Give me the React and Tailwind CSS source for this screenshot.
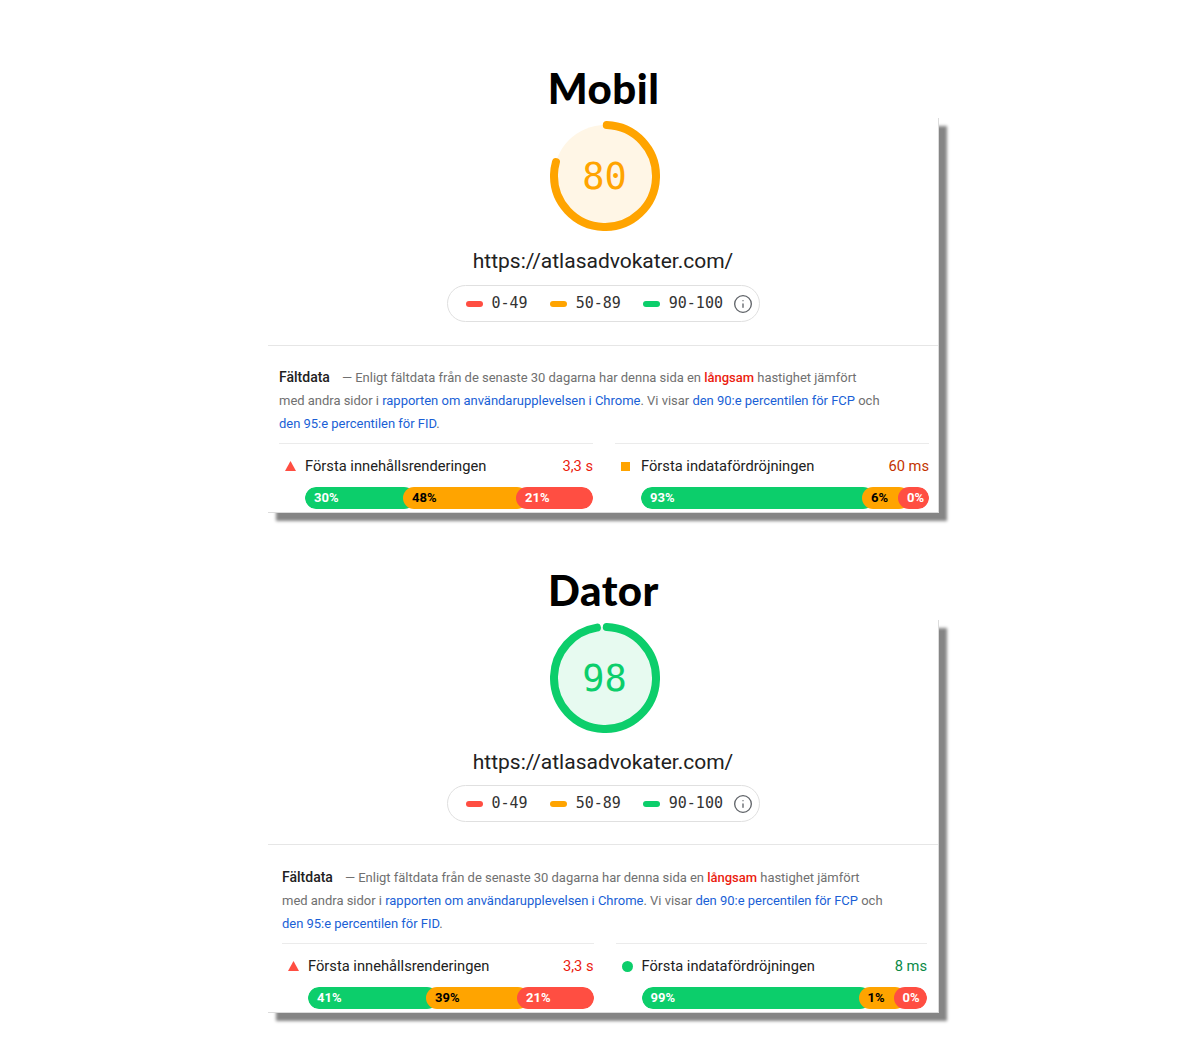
import React from "react";
import { Info } from "lucide-react";

const GREEN = "#0cce6b";
const ORANGE = "#ffa400";
const RED = "#ff4e42";

const sections = [
  {
    title: "Mobil",
    score: 80,
    ring: ORANGE,
    fill: "#fff6e6",
    scoreText: "text-[#ffa400]",
    pad: "pl-[11px] pr-[9px]",
    gap: { url: "mt-[16px]", legend: "mt-[10px]", divider: "mt-[23px]", text: "pt-[20px]" },
    metrics: [
      {
        icon: "triangle",
        label: "Första innehållsrenderingen",
        value: "3,3 s",
        valueColor: "text-[#eb1c0f]",
        segs: [
          { pct: "30%", w: "w-[110px]", bg: "bg-[#0cce6b]", text: "text-white" },
          { pct: "48%", w: "w-[125px]", bg: "bg-[#ffa400]", text: "text-black" },
          { pct: "21%", w: "flex-1", bg: "bg-[#ff4e42]", text: "text-white" },
        ],
      },
      {
        icon: "square",
        label: "Första indatafördröjningen",
        value: "60 ms",
        valueColor: "text-[#c33300]",
        segs: [
          { pct: "93%", w: "w-[233px]", bg: "bg-[#0cce6b]", text: "text-white" },
          { pct: "6%", w: "w-[48px]", bg: "bg-[#ffa400]", text: "text-black" },
          { pct: "0%", w: "flex-1", bg: "bg-[#ff4e42]", text: "text-white" },
        ],
      },
    ],
  },
  {
    title: "Dator",
    score: 98,
    ring: GREEN,
    fill: "#e7faf0",
    scoreText: "text-[#0cce6b]",
    pad: "pl-[14px] pr-[11px]",
    gap: { url: "mt-[15px]", legend: "mt-[9px]", divider: "mt-[22px]", text: "pt-[21px]" },
    metrics: [
      {
        icon: "triangle",
        label: "Första innehållsrenderingen",
        value: "3,3 s",
        valueColor: "text-[#eb1c0f]",
        segs: [
          { pct: "41%", w: "w-[130px]", bg: "bg-[#0cce6b]", text: "text-white" },
          { pct: "39%", w: "w-[103px]", bg: "bg-[#ffa400]", text: "text-black" },
          { pct: "21%", w: "flex-1", bg: "bg-[#ff4e42]", text: "text-white" },
        ],
      },
      {
        icon: "circle",
        label: "Första indatafördröjningen",
        value: "8 ms",
        valueColor: "text-[#0a8a47]",
        segs: [
          { pct: "99%", w: "w-[229px]", bg: "bg-[#0cce6b]", text: "text-white" },
          { pct: "1%", w: "w-[47px]", bg: "bg-[#ffa400]", text: "text-black" },
          { pct: "0%", w: "flex-1", bg: "bg-[#ff4e42]", text: "text-white" },
        ],
      },
    ],
  },
];

const Gauge = ({ score, ring, fill, scoreText }) => {
  const r = 51;
  const c = 2 * Math.PI * r;
  return (
    <div className="relative w-[110px] h-[110px]">
      <svg width="110" height="110" viewBox="0 0 110 110" className="-rotate-90">
        <circle cx="55" cy="55" r={r} fill={fill} />
        <circle
          cx="55"
          cy="55"
          r={r}
          fill="none"
          stroke={ring}
          strokeWidth="8"
          strokeLinecap="round"
          strokeDasharray={`${(c * score) / 100 - 4} ${c}`}
          transform="rotate(2 55 55)"
        />
      </svg>
      <div
        className={`absolute inset-0 flex items-center justify-center pt-[2px] font-['DejaVu_Sans_Mono',monospace] text-[37px] ${scoreText}`}
      >
        {score}
      </div>
    </div>
  );
};

const Legend = () => (
  <div className="mx-auto flex h-[37px] w-[313px] items-center rounded-full border border-[#e0e0e0] pl-[18px] font-['DejaVu_Sans_Mono',monospace] text-[15px] text-[#333]">
    <span className="h-[6px] w-[17px] rounded-full bg-[#ff4e42]" />
    <span className="ml-[9px]">0-49</span>
    <span className="ml-[22px] h-[6px] w-[17px] rounded-full bg-[#ffa400]" />
    <span className="ml-[9px]">50-89</span>
    <span className="ml-[22px] h-[6px] w-[17px] rounded-full bg-[#0cce6b]" />
    <span className="ml-[9px]">90-100</span>
    <Info className="ml-[10px] text-[#5f6368]" size={20} strokeWidth={1.6} />
  </div>
);

const MetricIcon = ({ kind }) => {
  if (kind === "triangle")
    return (
      <svg width="11" height="10" viewBox="0 0 11 10">
        <polygon points="5.5,0 11,10 0,10" fill={RED} />
      </svg>
    );
  if (kind === "square") return <span className="block h-[9px] w-[9px] bg-[#ffa400]" />;
  return <span className="block h-[11px] w-[11px] rounded-full bg-[#0cce6b]" />;
};

const Metric = ({ m }) => (
  <div className="flex-1 border-t border-[#ebebeb] pb-[3px]">
    <div className="mt-[12px] flex h-[20px] items-center text-[14.7px] leading-[20px]">
      <span className="flex w-[26px] pl-[6px]">
        <MetricIcon kind={m.icon} />
      </span>
      <span className="flex-1 text-[#212121]">{m.label}</span>
      <span className={m.valueColor}>{m.value}</span>
    </div>
    <div className="ml-[26px] mt-[11px] flex h-[22px] overflow-hidden rounded-full">
      {m.segs.map((s, i) => (
        <div
          key={i}
          className={`relative flex h-full items-center rounded-full pl-[9px] text-[13px] font-bold ${s.w} ${s.bg} ${s.text} ${i > 0 ? "-ml-[12px]" : ""}`}
        >
          {s.pct}
        </div>
      ))}
    </div>
  </div>
);

const Card = ({ s }) => (
  <div className="relative bg-white border-r border-b border-[#dcdcdc] shadow-[8px_8px_3px_rgba(0,0,0,0.48)]">
    <div className="flex justify-center pl-[3px] pt-[3px]">
      <Gauge score={s.score} ring={s.ring} fill={s.fill} scoreText={s.scoreText} />
    </div>
    <div className={`${s.gap.url} text-center text-[21px] leading-[28px] text-[#212121]`}>
      https://atlasadvokater.com/
    </div>
    <div className={s.gap.legend}>
      <Legend />
    </div>
    <div className={`${s.gap.divider} border-t border-[#e6e6e6]`} />
    <p className={`${s.gap.text} text-[13px] leading-[23px] tracking-[-0.02px] text-[#707070] ${s.pad}`}>
      <span className="mr-[12px] text-[14px] font-medium tracking-normal text-[#212121]">Fältdata</span>
      — Enligt fältdata från de senaste 30 dagarna har denna sida en{" "}
      <span className="font-medium text-[#eb1c0f]">långsam</span> hastighet jämfört
      <br />
      med andra sidor i{" "}
      <span className="text-[#1a5fd6]">rapporten om användarupplevelsen i Chrome</span>. Vi visar{" "}
      <span className="text-[#1a5fd6]">den 90:e percentilen för FCP</span> och
      <br />
      <span className="text-[#1a5fd6]">den 95:e percentilen för FID</span>.
    </p>
    <div className={`mt-[8px] flex gap-[22px] ${s.pad}`}>
      {s.metrics.map((m, i) => (
        <Metric key={i} m={m} />
      ))}
    </div>
  </div>
);

export default function App() {
  return (
    <div className="min-h-[1043px] bg-white pt-[68px] font-['Roboto',sans-serif]">
      {sections.map((s, i) => (
        <section key={s.title} className={`ml-[268px] w-[671px] ${i > 0 ? "mt-[57px]" : ""}`}>
          <h2 className="h-[50px] text-center font-['Lato',sans-serif] text-[42px] font-black leading-[41px] tracking-[0.5px] text-black">
            {s.title}
          </h2>
          <Card s={s} />
        </section>
      ))}
    </div>
  );
}
